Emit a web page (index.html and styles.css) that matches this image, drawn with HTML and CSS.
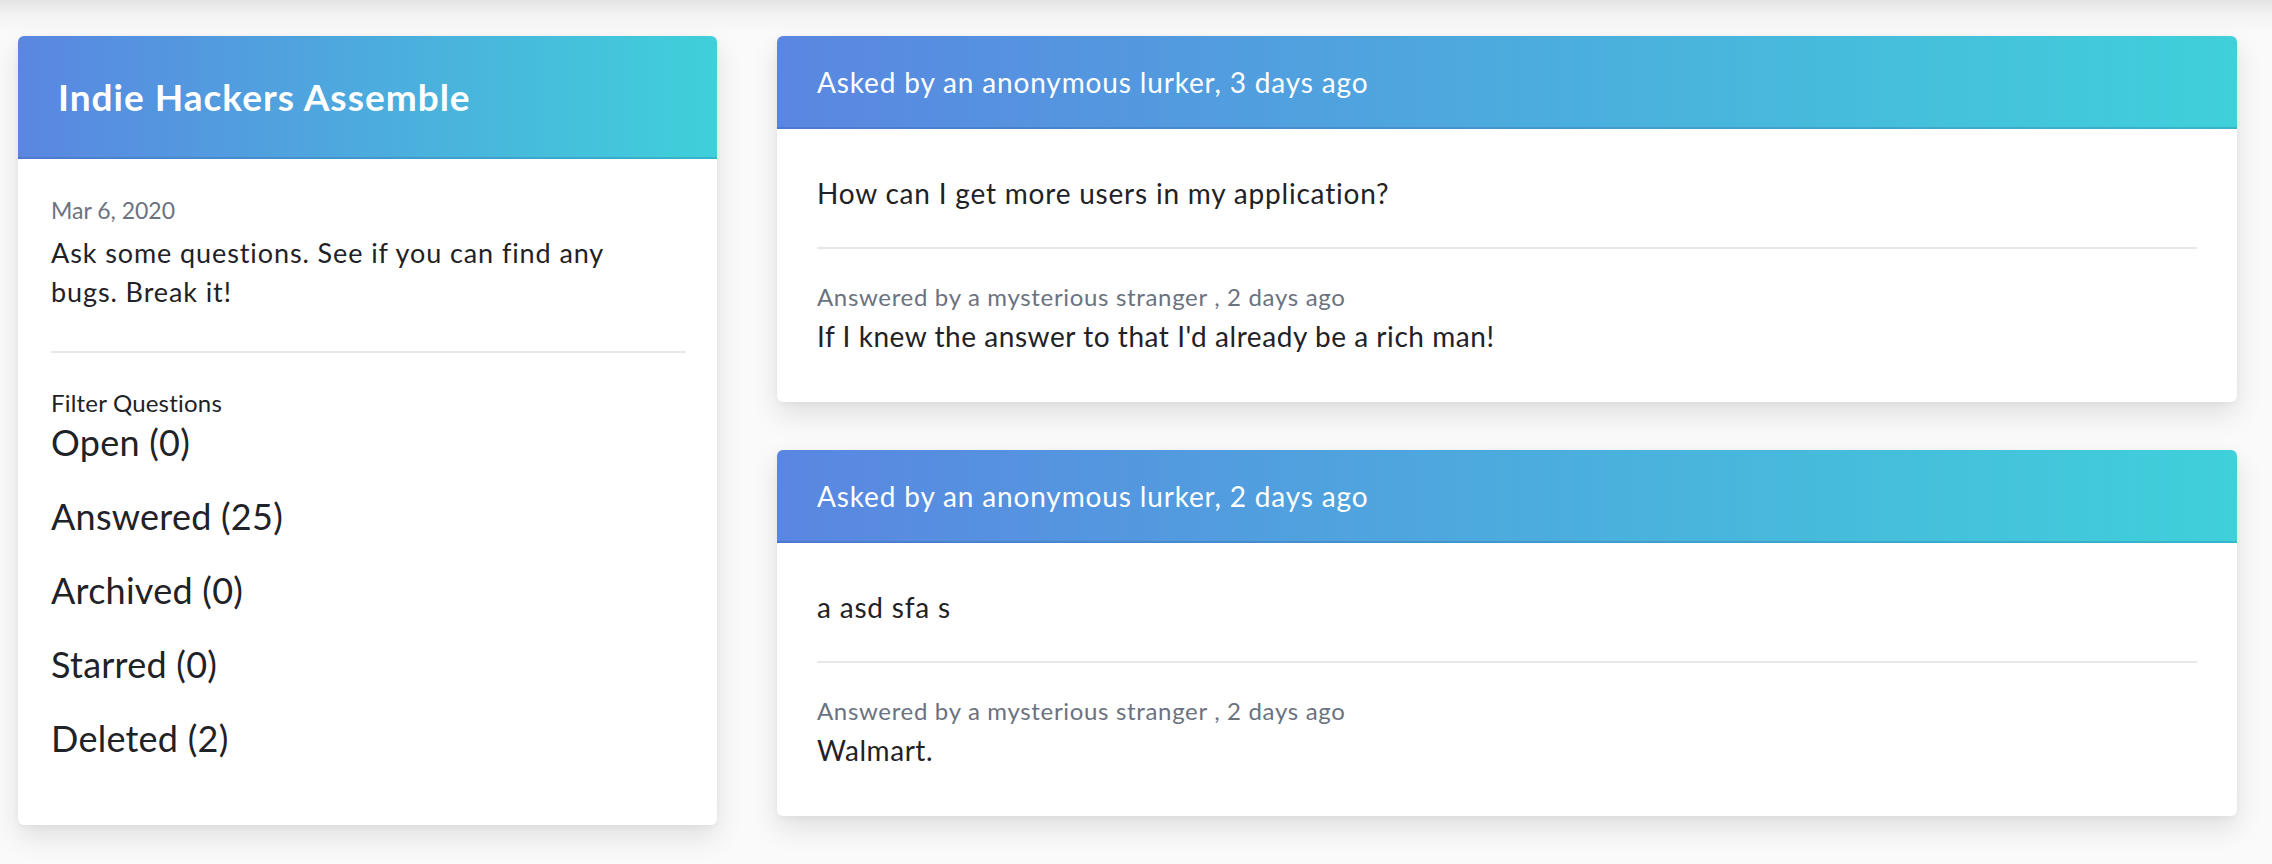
FILE: index.html
```html
<!DOCTYPE html>
<html lang="en">
<head>
<meta charset="utf-8">
<title>Indie Hackers Assemble</title>
<link rel="stylesheet" href="styles.css">
</head>
<body>
<div class="topbar"></div>
<main class="layout">
  <aside class="card side">
    <header class="side-head">
      <h1 class="side-title">Indie Hackers Assemble</h1>
    </header>
    <div class="side-body">
      <div class="date">Mar 6, 2020</div>
      <p class="desc">Ask some questions. See if you can find any bugs. Break it!</p>
      <hr class="rule">
      <div class="filter-label">Filter Questions</div>
      <ul class="filters">
        <li>Open (0)</li>
        <li>Answered (25)</li>
        <li>Archived (0)</li>
        <li>Starred (0)</li>
        <li>Deleted (2)</li>
      </ul>
    </div>
  </aside>
  <section class="questions">
    <article class="card q">
      <header class="q-head">Asked by an anonymous lurker, 3 days ago</header>
      <div class="q-body">
        <p class="q-text">How can I get more users in my application?</p>
        <hr class="rule">
        <div class="meta">Answered by a mysterious stranger , 2 days ago</div>
        <p class="answer">If I knew the answer to that I'd already be a rich man!</p>
      </div>
    </article>
    <article class="card q">
      <header class="q-head">Asked by an anonymous lurker, 2 days ago</header>
      <div class="q-body">
        <p class="q-text">a asd sfa s</p>
        <hr class="rule">
        <div class="meta">Answered by a mysterious stranger , 2 days ago</div>
        <p class="answer">Walmart.</p>
      </div>
    </article>
  </section>
</main>
</body>
</html>
```
FILE: styles.css
```css
* { box-sizing: border-box; }
html, body { margin: 0; padding: 0; }
body {
  background: #fafafa;
  font-family: Lato, "Open Sans", "Liberation Sans", sans-serif;
  color: #1f2226;
  width: 2272px;
  height: 864px;
  overflow: hidden;
  position: relative;
}
.topbar {
  height: 36px;
  background: linear-gradient(to bottom, #e4e4e4 0px, #f2f2f2 14px, #fafafa 32px);
}
.layout {
  display: flex;
  align-items: flex-start;
  padding-left: 18px;
  gap: 60px;
}
.card {
  background: #fff;
  border-radius: 6px;
  box-shadow: 0 12px 28px rgba(0, 0, 0, 0.11), 0 2px 6px rgba(0, 0, 0, 0.04);
  overflow: hidden;
}
.side { width: 699px; }
.side-head, .q-head {
  background: linear-gradient(to right, #5a86e1, #3fd0da);
  border-bottom: 2px solid rgba(20, 60, 130, 0.18);
  color: #fff;
}
.side-head {
  height: 123px;
  display: flex;
  align-items: center;
  padding: 0 40px;
}
.side-title {
  margin: 0;
  font-size: 37px;
  font-weight: 700;
  letter-spacing: 1px;
}
.side-body { padding: 36px 31px 36px 33px; }
.date {
  font-size: 23px;
  line-height: 30px;
  color: #6b7280;
  margin-bottom: 8px;
}
.desc {
  margin: 0;
  font-size: 27px;
  line-height: 39px;
  letter-spacing: 0.9px;
  max-width: 600px;
}
.rule {
  border: 0;
  height: 2px;
  background: #e8e8e8;
  margin: 40px 0 36px;
}
.filter-label {
  font-size: 24px;
  line-height: 28px;
  letter-spacing: 0.2px;
}
.filters {
  list-style: none;
  margin: 2px 0 0;
  padding: 0;
}
.filters li {
  font-size: 36px;
  line-height: 46px;
  letter-spacing: 0.25px;
  margin-bottom: 28px;
}
.questions {
  width: 1460px;
  display: flex;
  flex-direction: column;
  gap: 48px;
}
.q-head {
  height: 93px;
  line-height: 92px;
  padding: 0 40px;
  font-size: 28px;
  letter-spacing: 0.85px;
}
.q-body { padding: 44px 40px 47px; }
.q-text {
  margin: 0;
  font-size: 28px;
  line-height: 40px;
  letter-spacing: 0.8px;
}
.q-body .rule { margin: 34px 0 33px; }
.meta {
  font-size: 24px;
  line-height: 30px;
  letter-spacing: 0.67px;
  color: #6b7280;
  margin-bottom: 5px;
}
.answer {
  margin: 0;
  font-size: 28px;
  line-height: 38px;
  letter-spacing: 0.55px;
}
```
